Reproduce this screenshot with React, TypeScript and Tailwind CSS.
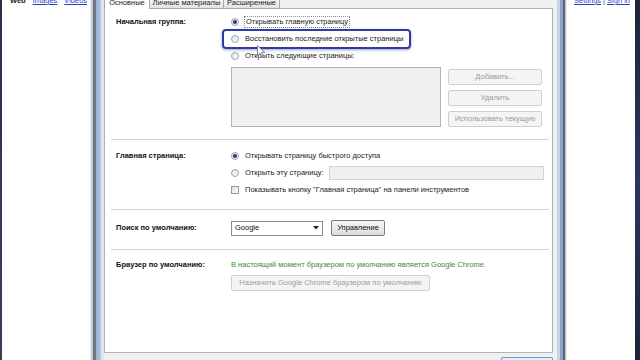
import React from "react";

function Radio({ on }: { on?: boolean }) {
  return (
    <span className="flex h-[8px] w-[8px] shrink-0 items-center justify-center rounded-full border border-[#9ba4b0] bg-gradient-to-br from-[#dde2e8] to-[#ffffff]">
      {on && <span className="h-[4px] w-[4px] rounded-full bg-[#263c6c]" />}
    </span>
  );
}

function Check() {
  return (
    <span className="h-[8px] w-[8px] shrink-0 border border-[#9a9a9a] bg-gradient-to-br from-[#dcdcdc] to-[#ffffff]" />
  );
}

function DisabledButton({ children, w }: { children: React.ReactNode; w: string }) {
  return (
    <div
      className={`flex h-[16px] ${w} items-center justify-center whitespace-nowrap rounded-[2px] border border-[#cfcfcf] bg-[#f4f4f4] text-[#9c9c9c]`}
    >
      {children}
    </div>
  );
}

function Label({ children }: { children: React.ReactNode }) {
  return (
    <div className="flex h-[14px] w-[120px] shrink-0 items-center whitespace-nowrap pl-[5px] font-bold text-[#111]">
      {children}
    </div>
  );
}

function Cursor() {
  return (
    <svg
      className="absolute left-[33px] top-[14px]"
      width="9"
      height="13"
      viewBox="0 0 9 13"
    >
      <path
        d="M0.5 0.5 L0.5 10.5 L3 8.2 L4.8 12 L6.2 11.3 L4.5 7.6 L7.8 7.6 Z"
        fill="#ffffff"
        stroke="#6a6f78"
        strokeWidth="0.8"
      />
    </svg>
  );
}

export default function App() {
  return (
    <div className="flex h-[360px] w-[640px] overflow-hidden bg-white font-['Liberation_Sans',Arial,sans-serif] text-[7.5px] text-[#1a1a1a]">
      <div className="w-[2px] shrink-0 bg-gradient-to-b from-[#2b3047] to-[#3b3f55]" />

      <div className="w-[88px] shrink-0 bg-white">
        <div className="-mt-[4px] flex gap-[7px] whitespace-nowrap pl-[8px] text-[7.5px] leading-[9px]">
          <span className="font-bold text-[#222]">Web</span>
          <span className="text-[#2a3ec8] underline">Images</span>
          <span className="text-[#2a3ec8] underline">Videos</span>
        </div>
      </div>

      <div className="flex w-[14px] shrink-0">
        <div className="w-[3px] bg-gradient-to-r from-[#f4f5f7] to-[#b4b8c0]" />
        <div className="w-[3px] bg-[#6f7686]" />
        <div className="w-[5px] bg-gradient-to-r from-[#9cb0d4] to-[#b7c6e2]" />
        <div className="w-[3px] bg-[#e4e8ee]" />
      </div>

      <div className="flex w-[453px] shrink-0 flex-col bg-[#f0f0f0]">
        <div className="relative z-10 flex h-[9px] -mb-px whitespace-nowrap">
          <div className="flex w-[46px] items-end justify-center overflow-hidden border-x border-[#a9a9a9] bg-white pb-[2px] leading-[8px]">
            Основные
          </div>
          <div className="flex w-[74px] items-end justify-center overflow-hidden border-r border-b border-[#a9a9a9] bg-gradient-to-b from-[#f5f5f5] to-[#e2e2e2] pb-[1px] leading-[8px]">
            Личные материалы
          </div>
          <div className="flex w-[56px] items-end justify-center overflow-hidden border-r border-b border-[#a9a9a9] bg-gradient-to-b from-[#f5f5f5] to-[#e2e2e2] pb-[1px] leading-[8px]">
            Расширенные
          </div>
        </div>

        <div className="flex">
          <div className="h-[345px] w-[449px] border border-[#b3b3b3] bg-white">
            <div className="ml-[6px] mr-[3px]">
              {/* Начальная группа */}
              <div className="flex border-b border-[#d4d4d4] pt-[6px] pb-[12px]">
                <Label>Начальная группа:</Label>
                <div className="flex flex-col">
                  <div className="flex h-[14px] items-center gap-[5px]">
                    <Radio on />
                    <span className="border border-dotted border-[#8a8a8a] px-[1px] leading-[10px]">
                      Открывать главную страницу
                    </span>
                  </div>
                  <div className="relative -ml-[9px] flex h-[20px] w-fit items-center gap-[6px] whitespace-nowrap rounded-[4px] border-2 border-[#2f3aa6] pl-[7px] pr-[6px] shadow-[0_1px_3px_rgba(40,50,120,0.45)]">
                    <Radio />
                    <span>Восстановить последние открытые страницы</span>
                    <Cursor />
                  </div>
                  <div className="flex h-[14px] items-center gap-[6px]">
                    <Radio />
                    <span>Открыть следующие страницы:</span>
                  </div>
                  <div className="mt-[4px] flex gap-[7px]">
                    <div className="h-[60px] w-[210px] border border-[#b4b4b4] bg-[#f0f0f0]" />
                    <div className="mt-[2px] flex flex-col gap-[5px]">
                      <DisabledButton w="w-[94px]">Добавить...</DisabledButton>
                      <DisabledButton w="w-[94px]">Удалить</DisabledButton>
                      <DisabledButton w="w-[94px]">Использовать текущую</DisabledButton>
                    </div>
                  </div>
                </div>
              </div>

              {/* Главная страница */}
              <div className="flex border-b border-[#d4d4d4] pt-[9px] pb-[12px]">
                <Label>Главная страница:</Label>
                <div className="flex flex-col">
                  <div className="flex h-[14px] items-center gap-[6px]">
                    <Radio on />
                    <span>Открывать страницу быстрого доступа</span>
                  </div>
                  <div className="flex h-[20px] items-center gap-[6px] whitespace-nowrap">
                    <Radio />
                    <span className="w-[78px]">Открыть эту страницу:</span>
                    <div className="h-[14px] w-[215px] shrink-0 border border-[#d2d2d2] bg-[#f0f0f0]" />
                  </div>
                  <div className="flex h-[14px] items-center gap-[6px] whitespace-nowrap">
                    <Check />
                    <span>Показывать кнопку "Главная страница" на панели инструментов</span>
                  </div>
                </div>
              </div>

              {/* Поиск */}
              <div className="flex border-b border-[#d4d4d4] pt-[10px] pb-[13px]">
                <div className="flex h-[16px] w-[120px] shrink-0 items-center whitespace-nowrap pl-[5px] font-bold text-[#111]">
                  Поиск по умолчанию:
                </div>
                <div className="flex h-[16px] items-center gap-[8px]">
                  <div className="flex h-[15px] w-[92px] items-center justify-between border border-[#8c8c8c] bg-white pl-[3px] pr-[3px]">
                    <span className="text-[#111]">Google</span>
                    <svg width="6" height="4" viewBox="0 0 6 4">
                      <path d="M0 0 L6 0 L3 3.5 Z" fill="#222" />
                    </svg>
                  </div>
                  <div className="flex h-[16px] w-[54px] items-center justify-center rounded-[2px] border border-[#7a7a7a] bg-gradient-to-b from-[#f6f6f6] to-[#dcdcdc] text-[#111]">
                    Управление
                  </div>
                </div>
              </div>

              {/* Браузер */}
              <div className="flex pt-[8px]">
                <Label>Браузер по умолчанию:</Label>
                <div className="flex flex-col">
                  <div className="flex h-[14px] items-center whitespace-nowrap text-[#3d8a3d]">
                    В настоящий момент браузером по умолчанию является Google Chrome.
                  </div>
                  <div className="mt-[3px]">
                    <DisabledButton w="w-[199px]">
                      Назначить Google Chrome браузером по умолчанию
                    </DisabledButton>
                  </div>
                </div>
              </div>
            </div>
          </div>
        </div>

        <div className="flex justify-end pr-[4px] pt-[4px]">
          <div className="h-[4px] w-[52px] rounded-t-[2px] border-x border-t border-[#6f9ad0] bg-[#e6f0fa]" />
        </div>
      </div>

      <div className="flex w-[10px] shrink-0">
        <div className="w-[3px] bg-[#c6d3e9]" />
        <div className="w-[3px] bg-[#8ea3cb]" />
        <div className="w-[2px] bg-[#5e6371]" />
        <div className="w-[2px] bg-gradient-to-r from-[#b4b8c0] to-[#f4f5f7]" />
      </div>

      <div className="w-[68px] shrink-0 bg-white">
        <div className="-mt-[4px] flex justify-end gap-[2px] whitespace-nowrap pr-[5px] text-[7.5px] leading-[9px] text-[#2a3ec8]">
          <span className="underline">Settings</span>
          <span className="text-[#444]">|</span>
          <span className="underline">Sign in</span>
        </div>
      </div>

      <div className="w-[5px] shrink-0 bg-gradient-to-b from-[#1f2336] via-[#2a3560] to-[#1f2336]" />
    </div>
  );
}
